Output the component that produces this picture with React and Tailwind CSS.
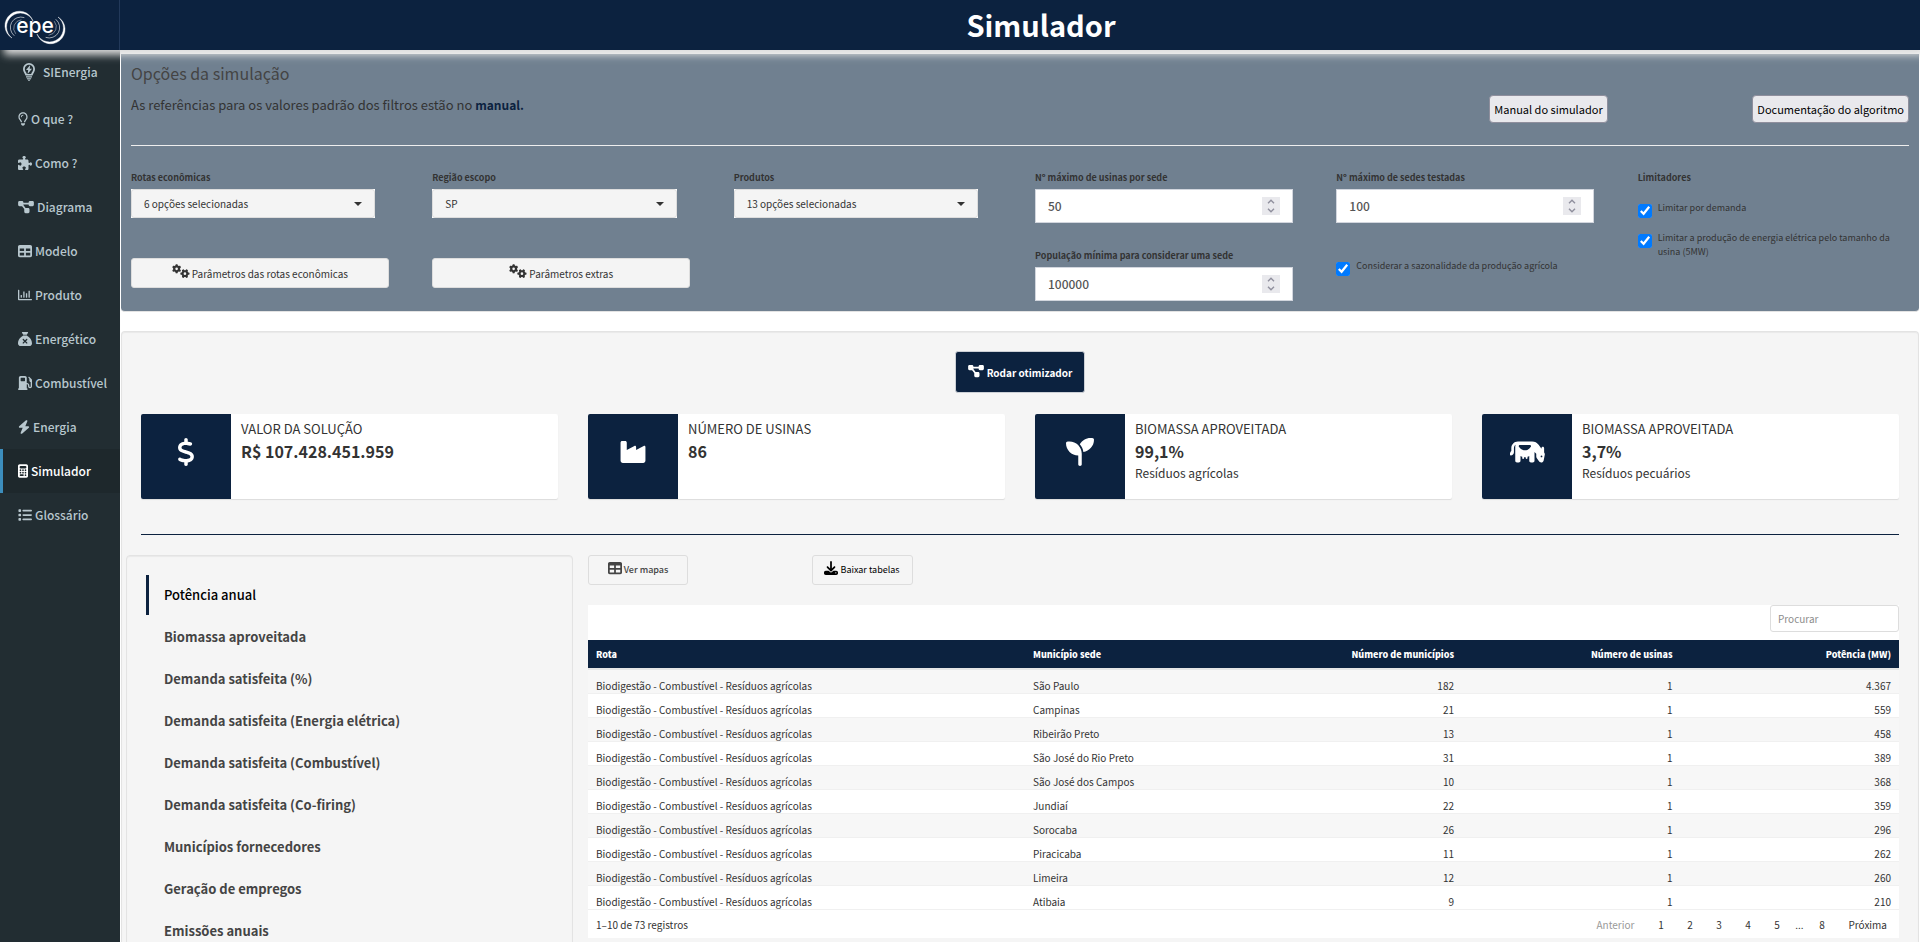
import {
  FaBolt, FaCalculator, FaCow, FaDiagramProject, FaDollarSign, FaDownload, FaGasPump, FaGears,
  FaIndustry, FaList, FaPuzzlePiece, FaRegLightbulb, FaSackXmark, FaSeedling, FaTable,
} from "react-icons/fa6";
import { FaRegChartBar } from "react-icons/fa";

const menu = [
  ["O que ?", FaRegLightbulb, "h-[14px] w-[10px]"],
  ["Como ?", FaPuzzlePiece, "h-[14px] w-[14px]"],
  ["Diagrama", FaDiagramProject, "h-[14px] w-4"],
  ["Modelo", FaTable, "h-[14px] w-[14px]"],
  ["Produto", FaRegChartBar, "h-[14px] w-[14px]"],
  ["Energético", FaSackXmark, "h-[14px] w-[14px]"],
  ["Combustível", FaGasPump, "h-[14px] w-[14px]"],
  ["Energia", FaBolt, "h-[14px] w-3"],
  ["Simulador", FaCalculator, "h-[14px] w-[10px]"],
  ["Glossário", FaList, "h-[14px] w-[14px]"],
];

const cards = [
  ["VALOR DA SOLUÇÃO", "R$ 107.428.451.959", "", FaDollarSign],
  ["NÚMERO DE USINAS", "86", "", FaIndustry],
  ["BIOMASSA APROVEITADA", "99,1%", "Resíduos agrícolas", FaSeedling],
  ["BIOMASSA APROVEITADA", "3,7%", "Resíduos pecuários", FaCow],
];

const views = [
  "Potência anual",
  "Biomassa aproveitada",
  "Demanda satisfeita (%)",
  "Demanda satisfeita (Energia elétrica)",
  "Demanda satisfeita (Combustível)",
  "Demanda satisfeita (Co-firing)",
  "Municípios fornecedores",
  "Geração de empregos",
  "Emissões anuais",
];

const rows = [
  ["São Paulo", "182", "1", "4.367"],
  ["Campinas", "21", "1", "559"],
  ["Ribeirão Preto", "13", "1", "458"],
  ["São José do Rio Preto", "31", "1", "389"],
  ["São José dos Campos", "10", "1", "368"],
  ["Jundiaí", "22", "1", "359"],
  ["Sorocaba", "26", "1", "296"],
  ["Piracicaba", "11", "1", "262"],
  ["Limeira", "12", "1", "260"],
  ["Atibaia", "9", "1", "210"],
];

function Logo() {
  return (
    <svg viewBox="0 0 70 50" className="h-[50px] w-[70px]" role="img" aria-label="epe">
      <g fill="#fff">
        <path d="M12 38A14.4 14.4 0 1 1 33 21A13.9 13.9 0 1 0 12 38Z" stroke="#fff" strokeWidth="0.4" />
        <path d="M58 17A14.4 14.4 0 1 1 37 34A13.9 13.9 0 1 0 58 17Z" stroke="#fff" strokeWidth="0.4" />
      </g>
      <g fill="none" stroke="#fff" strokeLinecap="round">
        <path d="M14 35.500A10.500 10.500 0 0 1 24 17.500" strokeWidth="0.8" opacity="0.75" />
        <path d="M15.500 33.500A8.500 8.500 0 0 1 21 19.800" strokeWidth="0.7" opacity="0.6" />
        <path d="M56 19.500A10.500 10.500 0 0 1 46 37.500" strokeWidth="0.8" opacity="0.75" />
        <path d="M54.500 21.500A8.500 8.500 0 0 1 49 35.200" strokeWidth="0.7" opacity="0.6" />
      </g>
      <text x="35" y="33" textAnchor="middle" fill="#fff" fontFamily="Inter, sans-serif" fontWeight="500" fontSize="21">
        epe
      </text>
    </svg>
  );
}

function BulbBolt() {
  return (
    <svg viewBox="0 0 12 18" className="h-[18px] w-3" aria-hidden="true">
      <path
        fill="currentColor"
        fillRule="evenodd"
        d="M6 0a6 6 0 0 1 6 6c0 2.600-1.600 3.900-2.500 6.500h-7C1.600 9.900 0 8.600 0 6a6 6 0 0 1 6-6zm0 1.800A4.200 4.200 0 0 0 1.800 6c0 1.900 1.200 2.900 2.100 5h4.200C9 8.900 10.200 7.900 10.200 6A4.200 4.200 0 0 0 6 1.800z"
      />
      <path fill="currentColor" d="M7.200 2 3 6.900h2.200L4.600 11 9 5.800H6.700zM3 13.300h6v1.300H3zM3.600 15.200h4.800l-.8 1.400H4.400zM5 17h2l-.6 1h-.8z" />
    </svg>
  );
}

function SelectField({ id, label, value }) {
  return (
    <div className="flex flex-col">
      <label htmlFor={id} className="mb-1 text-[9px] leading-[14px] font-bold">{label}</label>
      <div className="grid w-[90%] items-center bg-white">
        <select
          id={id}
          className="[grid-area:1/1] h-[29px] w-full appearance-none rounded-[3px] border border-[#ddd] bg-[#f4f4f4] pl-3 text-[10px] text-[#333]"
        >
          <option>{value}</option>
        </select>
        <svg viewBox="0 0 8 4" className="pointer-events-none mr-[13px] h-1 w-2 justify-self-end [grid-area:1/1]" aria-hidden="true">
          <path d="M0 0h8L4 4z" fill="#333" />
        </svg>
      </div>
    </div>
  );
}

function NumberField({ id, label, value }) {
  return (
    <div className="flex flex-col">
      <label htmlFor={id} className="mb-1 text-[9px] leading-[14px] font-bold">{label}</label>
      <div className="grid w-[95%] items-center">
        <input
          id={id}
          type="number"
          defaultValue={value}
          className="[grid-area:1/1] h-[34px] w-full [appearance:textfield] border border-[#d2d6de] bg-white pb-[2px] pl-3 text-[12px] font-medium text-[#555] [&::-webkit-inner-spin-button]:appearance-none"
        />
        <div className="mr-[13px] flex h-[18px] w-[18px] flex-col justify-self-end bg-[#e9e9ed] text-[#8f8f9d] [grid-area:1/1]">
          <button type="button" aria-label="Aumentar" className="flex h-[9px] items-center justify-center">
            <svg viewBox="0 0 8 5" className="h-[5px] w-2" fill="none" stroke="currentColor" strokeWidth="1.4">
              <path d="M1 4.300 4 1.300 7 4.300" />
            </svg>
          </button>
          <button type="button" aria-label="Diminuir" className="flex h-[9px] items-center justify-center">
            <svg viewBox="0 0 8 5" className="h-[5px] w-2" fill="none" stroke="currentColor" strokeWidth="1.4">
              <path d="M1 0.700 4 3.700 7 0.700" />
            </svg>
          </button>
        </div>
      </div>
    </div>
  );
}

function Check({ children }) {
  return (
    <label className="flex items-start gap-[6px] text-[9px] leading-[14px]">
      <input type="checkbox" defaultChecked className="mt-[3px] h-[14px] w-[14px] shrink-0 accent-[#007aff]" />
      <span>{children}</span>
    </label>
  );
}

function ParamButton({ children }) {
  return (
    <button type="button" className="mt-10 flex h-[30px] w-[95%] items-center justify-center gap-[2px] rounded-[3px] border border-[#ddd] bg-[#f4f4f4] text-[10px] text-[#333]">
      <FaGears className="mb-1 h-[14px] w-[18px]" />
      {children}
    </button>
  );
}

function PageButton({ children }) {
  return <button type="button" className="w-[29px] text-center">{children}</button>;
}

export default function App() {
  return (
    <div className="flex min-h-screen flex-col bg-white font-['Noto_Sans_CJK_SC','Source_Sans_Pro',sans-serif] text-[#333]">
      <header className="relative z-10 flex h-[50px] bg-[#0c223f] text-white shadow-[4px_5px_8px_#dcdcdc]">
        <a href="#inicio" className="w-[120px] shrink-0 border-r border-[#22395a]">
          <Logo />
        </a>
        <h1 className="grow pl-[42px] text-center text-[29px] leading-[48px] font-bold">Simulador</h1>
      </header>

      <div className="flex grow">
        <nav className="w-[120px] shrink-0 bg-[#222d32] text-[12px] font-medium text-[#b8c7ce]">
          <a href="#sienergia" className="flex h-[47px] items-center gap-2 pb-1 pl-[23px]">
            <BulbBolt />
            SIEnergia
          </a>
          {menu.map(([label, Icon, size]) => (
            <a
              key={label}
              href={`#${label}`}
              className={
                label === "Simulador"
                  ? "flex h-11 items-center gap-[3px] border-l-[3px] border-[#3c8dbc] bg-[#1e282c] pl-[15px] text-white"
                  : "flex h-11 items-center gap-[3px] border-l-[3px] border-transparent pl-[15px]"
              }
            >
              <Icon className={size} />
              {label}
            </a>
          ))}
        </nav>

        <main className="min-w-0 grow px-px pt-1">
          <section className="rounded-b-[4px] border-b border-[#e3e3e3] bg-[#708090] px-[10px] pt-[7px] pb-[10px]">
            <h2 className="text-[16px] leading-6 text-[#444]">Opções da simulação</h2>
            <div className="mt-[10px] grid grid-cols-6 gap-x-[30px] border-b border-[#eee] pb-[22px]">
              <p className="col-span-4 text-[13px] leading-5">
                As referências para os valores padrão dos filtros estão no{" "}
                <a href="#manual" className="text-[12px] font-bold text-[#0c223f]">manual.</a>
              </p>
              <button type="button" className="h-7 justify-self-end rounded-[4px] border border-[#8f8f9d] bg-[#e9e9ed] px-1 text-[11px] text-black">
                Manual do simulador
              </button>
              <button type="button" className="h-7 justify-self-end rounded-[4px] border border-[#8f8f9d] bg-[#e9e9ed] px-1 text-[11px] text-black">
                Documentação do algoritmo
              </button>
            </div>

            <div className="mt-[25px] grid grid-cols-6 gap-x-[30px]">
              <div>
                <SelectField id="rotas" label="Rotas econômicas" value="6 opções selecionadas" />
                <ParamButton>Parâmetros das rotas econômicas</ParamButton>
              </div>
              <div>
                <SelectField id="regiao" label="Região escopo" value="SP" />
                <ParamButton>Parâmetros extras</ParamButton>
              </div>
              <SelectField id="produtos" label="Produtos" value="13 opções selecionadas" />
              <div className="flex flex-col gap-[26px]">
                <NumberField id="usinas" label="Nº máximo de usinas por sede" value="50" />
                <NumberField id="populacao" label="População mínima para considerar uma sede" value="100000" />
              </div>
              <div className="flex flex-col gap-9">
                <NumberField id="sedes" label="Nº máximo de sedes testadas" value="100" />
                <Check>Considerar a sazonalidade da produção agrícola</Check>
              </div>
              <fieldset>
                <legend className="mb-4 text-[9px] leading-[14px] font-bold">Limitadores</legend>
                <div className="flex flex-col gap-[13px]">
                  <Check>Limitar por demanda</Check>
                  <Check>Limitar a produção de energia elétrica pelo tamanho da usina (5MW)</Check>
                </div>
              </fieldset>
            </div>
          </section>

          <section className="mt-[19px] rounded-t-[4px] border border-b-0 border-[#e3e3e3] bg-[#f5f5f5] pt-[19px] pb-1 shadow-[inset_0_1px_1px_#0000000d]">
            <div className="px-[19px]">
              <button type="button" className="mx-auto flex h-[42px] items-center gap-[3px] rounded-[3px] border border-[#ccd0d6] bg-[#0c223f] px-3 text-[10px] font-bold text-white">
                <FaDiagramProject className="mb-[2px] h-[14px] w-4" />
                Rodar otimizador
              </button>
              <div className="mt-[21px] grid grid-cols-4 gap-[30px]">
                {cards.map(([title, value, note, Icon], i) => (
                  <article key={i} className="flex h-[85px] overflow-hidden rounded-[2px] bg-white shadow-[0_1px_1px_#0000001a]">
                    <div className="flex w-[90px] shrink-0 items-center justify-center bg-[#0c223f] pb-[9px] text-white">
                      <Icon className={Icon === FaCow ? "h-7 w-[35px]" : "h-7 w-7"} />
                    </div>
                    <div className="px-[10px] py-[5px]">
                      <h3 className="text-[13px] leading-5">{title}</h3>
                      <p className="text-[16px] leading-6 font-bold">{value}</p>
                      <p className="text-[12px] leading-5">{note}</p>
                    </div>
                  </article>
                ))}
              </div>
              <hr className="mt-[35px] mb-5 border-[#0c223f]" />
            </div>

            <div className="grid grid-cols-4 px-1">
              <div className="rounded-[4px] border border-[#e3e3e3] p-[19px] shadow-[inset_0_1px_1px_#0000000d]">
                <ul className="flex flex-col gap-[2px]">
                  {views.map((v, i) => (
                    <li key={v}>
                      <a
                        href={`#vista-${i}`}
                        className={
                          i === 0
                            ? "block border-l-[3px] border-[#0c223f] pl-[15px] text-[13px] leading-10 font-medium text-black"
                            : "block border-l-[3px] border-transparent pl-[15px] text-[13px] leading-10 font-bold text-[#444]"
                        }
                      >
                        {v}
                      </a>
                    </li>
                  ))}
                </ul>
              </div>

              <div className="col-span-3 px-[15px]">
                <div className="grid grid-cols-6 gap-[30px]">
                  <button type="button" className="flex h-[30px] w-[100px] items-center justify-center gap-[2px] rounded-[3px] border border-[#ddd] text-[9px] font-medium text-[#444]">
                    <FaTable className="mb-1 h-[14px] w-[14px]" />
                    Ver mapas
                  </button>
                  <button type="button" className="flex h-[30px] w-[101px] items-center justify-center gap-[2px] rounded-[3px] border border-[#ddd] text-[9px] text-black">
                    <FaDownload className="mb-1 h-[14px] w-[14px]" />
                    Baixar tabelas
                  </button>
                </div>

                <div className="mt-5 bg-white text-[10px]">
                  <div className="flex justify-end pb-2">
                    <input
                      type="search"
                      aria-label="Procurar"
                      placeholder="Procurar"
                      className="h-[27px] w-[129px] rounded-[3px] border border-[#ddd] bg-white px-[7px] placeholder:text-[#8c8c8c]"
                    />
                  </div>
                  <table className="w-full table-fixed border-separate border-spacing-0">
                    <thead>
                      <tr className="bg-[#0c223f] text-[9px] leading-[26px] text-white [&>th]:border-b-2 [&>th]:border-[#e6e6e6] [&>th]:px-2 [&>th]:pt-[2px] [&>th]:font-black">
                        <th className="w-2/6 text-left">Rota</th>
                        <th className="text-left">Município sede</th>
                        <th className="text-right">Número de municípios</th>
                        <th className="text-right">Número de usinas</th>
                        <th className="text-right">Potência (MW)</th>
                      </tr>
                    </thead>
                    <tbody>
                      {rows.map(([city, towns, plants, power]) => (
                        <tr key={city} className="leading-[14px] odd:bg-[#f7f7f7] [&>td]:border-b [&>td]:border-[#f0f0f0] [&>td]:px-2 [&>td]:pt-[9px]">
                          <td>Biodigestão - Combustível - Resíduos agrícolas</td>
                          <td>{city}</td>
                          <td className="text-right">{towns}</td>
                          <td className="text-right">{plants}</td>
                          <td className="text-right">{power}</td>
                        </tr>
                      ))}
                    </tbody>
                  </table>
                  <div className="flex h-7 items-center justify-between pt-px pl-2">
                    <span>1–10 de 73 registros</span>
                    <div className="flex">
                      <button type="button" disabled className="px-3 text-[#999]">Anterior</button>
                      {["1", "2", "3", "4", "5"].map((n) => <PageButton key={n}>{n}</PageButton>)}
                      <span className="w-4 text-center">...</span>
                      <PageButton>8</PageButton>
                      <button type="button" className="px-3">Próxima</button>
                    </div>
                  </div>
                </div>
              </div>
            </div>
          </section>
        </main>
      </div>
    </div>
  );
}
